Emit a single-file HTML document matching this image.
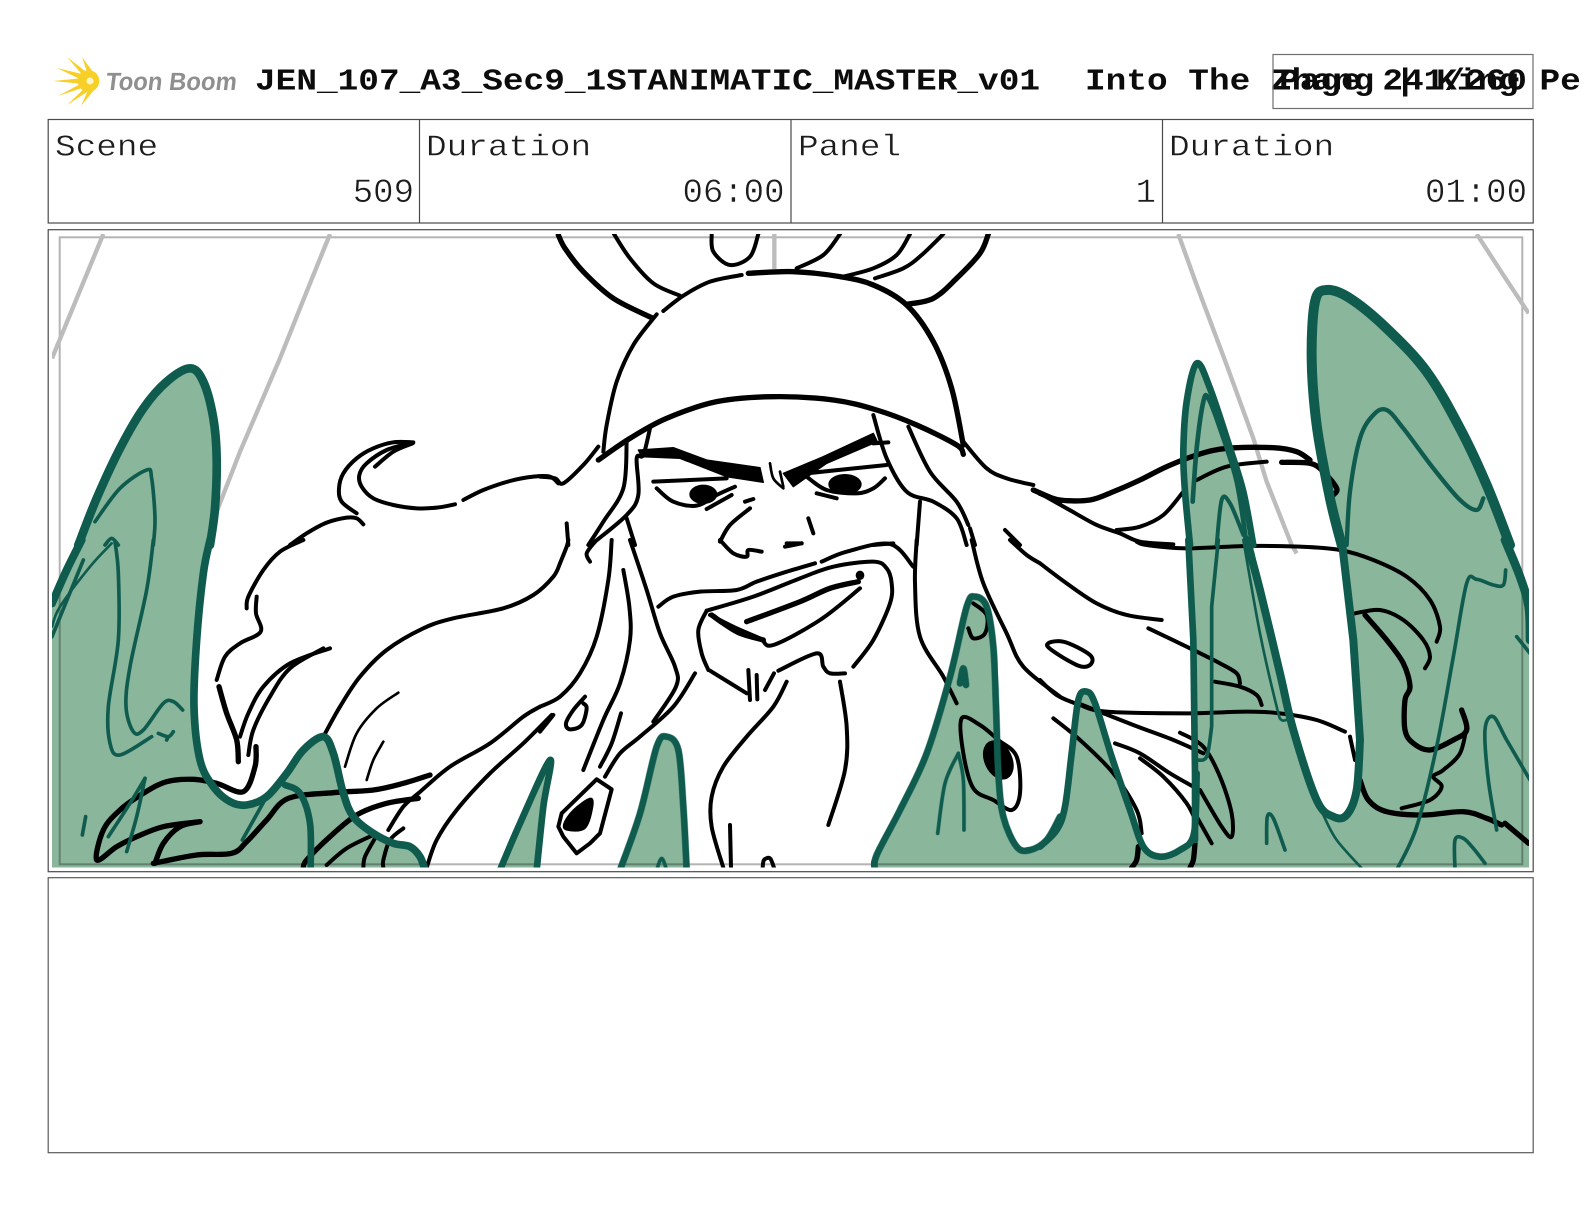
<!DOCTYPE html>
<html><head><meta charset="utf-8"><title>Storyboard page</title>
<style>
html,body{margin:0;padding:0;background:#fff;width:1584px;height:1224px;overflow:hidden}
svg{display:block}
.t{font-family:"Liberation Mono",monospace;font-size:30.500px;fill:#1c1c1c;stroke:#fff;stroke-width:.38px;white-space:pre}
.v{font-family:"Liberation Mono",monospace;font-size:34px;fill:#1c1c1c;stroke:#fff;stroke-width:.5px;white-space:pre}
.b{font-family:"Liberation Mono",monospace;font-size:31px;font-weight:bold;fill:#0c0c0c;white-space:pre}
.k path{fill:none;stroke:#000;stroke-width:12;stroke-linecap:round;stroke-linejoin:round}
.k path.f{fill:#000;stroke-width:4}
.k ellipse{fill:#000}
.k path.h{stroke-width:16}
.k path.n{stroke-width:8}
.y path{fill:none;stroke:#bcbcbc;stroke-width:13}
.g path{fill:none;stroke:#0f5c4e;stroke-width:11;stroke-linecap:round;stroke-linejoin:round}
.g path.h{stroke-width:20}
.g path.n{stroke-width:8}
.m{mix-blend-mode:multiply}
.m path{fill:#8ab69c;stroke:#8ab69c;stroke-width:2}
</style></head><body>
<svg width="1584" height="1224" viewBox="0 0 1584 1224" xmlns="http://www.w3.org/2000/svg">
<defs><clipPath id="c"><rect x="52.3" y="234" width="1476.7" height="633.5"/></clipPath></defs>
<rect width="1584" height="1224" fill="#fff"/>

<!-- logo -->
<g fill="#f8cf26">
<path d="M53 81L84 78L84 84Z"/><path d="M57 68L86 75L84 81Z"/><path d="M67 57L89 74L85 78Z"/><path d="M82 57L93 72L88 75Z"/>
<path d="M58 96L84 82L85 87Z"/><path d="M67 105L87 86L90 90Z"/><path d="M81 106L89 88L94 90Z"/>
<circle cx="88.500" cy="81" r="10.800"/>
<circle cx="90" cy="81" r="3.500" fill="#fff6c8"/>
</g>
<text transform="translate(105,90) skewX(-7)" font-family="Liberation Sans,sans-serif" font-size="25" font-weight="bold" fill="#8f8f8f" textLength="131" lengthAdjust="spacingAndGlyphs">Toon Boom</text>

<!-- title -->
<text class="b" transform="translate(255,89.500) scale(1.111,1)">JEN_107_A3_Sec9_1STANIMATIC_MASTER_v01</text>
<text class="b" transform="translate(1085,89.500) scale(1.111,1)">Into The Zhang | King Pe</text>
<rect x="1273" y="54.500" width="260" height="54" fill="none" stroke="#6f6f6f" stroke-width="1.200"/>
<text class="b" transform="translate(1403,89.500) scale(1.111,1)" text-anchor="middle">Page 241/260</text>

<!-- header table -->
<rect x="48.200" y="119.500" width="1485" height="103.500" fill="none" stroke="#4a4a4a" stroke-width="1.200"/>
<path d="M419.500 119.500V223M791 119.500V223M1162.500 119.500V223" stroke="#4a4a4a" stroke-width="1.200"/>
<text class="t" transform="translate(55,155.500) scale(1.128,1)">Scene</text><text class="v" x="414" y="202" text-anchor="end">509</text>
<text class="t" transform="translate(426,155.500) scale(1.128,1)">Duration</text><text class="v" x="784.500" y="202" text-anchor="end">06:00</text>
<text class="t" transform="translate(798,155.500) scale(1.128,1)">Panel</text><text class="v" x="1156" y="202" text-anchor="end">1</text>
<text class="t" transform="translate(1169,155.500) scale(1.128,1)">Duration</text><text class="v" x="1527" y="202" text-anchor="end">01:00</text>

<!-- frames -->
<rect x="48.200" y="229.700" width="1485" height="642" fill="none" stroke="#4a4a4a" stroke-width="1.200"/>
<rect x="48.200" y="877.700" width="1485" height="275" fill="none" stroke="#5a5a5a" stroke-width="1.200"/>

<g clip-path="url(#c)">
<rect x="52" y="234" width="1478" height="634" fill="#fff"/>
<rect x="59.700" y="237.300" width="1462.600" height="627" fill="none" stroke="#b4b4b4" stroke-width="2"/>

<!-- gray perspective lines -->
<g class="y">
<g transform="translate(40,225) scale(.33333)"><path d="M190 27L36 400"/><path d="M870 27L800 200L720 400L600 680L530 860"/></g>
<g transform="translate(540,225) scale(.33333)"><path d="M703 27V132"/></g>
<g transform="translate(1040,225) scale(.33333)"><path d="M415 27L470 180L560 420L640 640L680 770L755 960L770 985"/><path d="M1310 27L1390 150L1466 265"/></g>
</g>

<!-- black ink -->
<g class="k">
<g transform="translate(40,225) scale(.33333)">
<path d="M1120 652L1060 652L1000 670L950 700L910 745L897 790L905 830L950 865"/>
<path d="M1118 655L1060 680L1005 725"/>
<path d="M1110 655L1040 675L980 715L958 750L965 785L1000 820L1060 840L1130 850L1190 848L1245 838"/>
<path d="M1270 825L1330 795L1410 768L1480 755L1530 755L1555 775"/>
<path d="M750 960L800 925L860 893L920 878L950 880L970 898"/>
</g>
<g transform="translate(40,540) scale(.33333)">
<path d="M790 0L720 35L670 90L625 170L620 205"/>
<path d="M650 170L648 220L662 275L600 310L555 350L530 420"/>
<path d="M537 440L560 520L590 600L595 665" class="h"/>
<path d="M600 590L625 520L670 440L750 370L870 325"/>
<path d="M625 645L640 570L690 470L750 385L850 325"/>
<path d="M648 620L645 680L610 755L530 730L460 718L380 725L310 760L240 810L190 870L170 960L230 920L290 890L370 860L480 845" class="h"/>
<path d="M480 845L420 860L370 910L345 970" class="h"/>
<path d="M340 970L470 945L575 940L620 905L680 840L745 775L880 758L1000 750L1090 730L1170 705" class="h"/>
<path d="M1135 775L1040 790L950 825L870 890L800 960L790 983" class="h"/>
<path d="M1000 885L920 925L860 975"/>
<path d="M1005 895L975 950L970 983"/>
<path d="M1090 865L1050 900L1030 960L1030 983"/>
<path d="M850 590L900 500L960 410L1040 330L1150 265L1240 235L1390 205L1480 165L1540 110L1560 70"/>
<path d="M915 680L950 580L1010 505L1075 458" class="n"/>
<path d="M980 720L1000 660L1030 605" class="n"/>
<path d="M1160 983L1190 900L1250 810L1350 700L1450 610L1535 525"/>
<path d="M1045 870L1090 800L1135 760L1230 680L1350 610L1450 530L1500 500"/>
<path d="M1560 840V885" class="h"/>
</g>
<g transform="translate(540,225) scale(.33333)">
<path d="M55 30L75 70L130 140L220 220L335 278" class="h"/>
<path d="M222 27L270 100L340 175L420 212"/>
<path d="M515 27L520 80L570 120L630 95L655 27"/>
<path d="M770 130L850 90L900 27"/>
<path d="M910 155L1000 130L1070 90L1110 27"/>
<path d="M1005 160L1090 130L1145 90L1210 27"/>
<path d="M1100 238L1180 220L1250 160L1320 85L1345 27" class="h"/>
<path d="M625 145L760 140L900 155L1000 180L1100 240L1180 350L1235 490L1270 660" class="h"/>
<path d="M370 258L430 212L510 170L605 150"/>
<path d="M350 268L280 360L230 470L200 600L190 680"/>
<path d="M175 705L270 640L380 580L530 530L700 515L880 525L1010 555L1130 600L1250 660L1270 688" class="h"/>
<path d="M175 665L130 720L70 775L45 760L0 755"/>
<path d="M260 650L250 790L190 890L145 960"/>
<path d="M330 610L310 690L290 700L295 810L260 870L165 950"/>
<path d="M260 880L285 960"/>
<path d="M80 895L85 960"/>
<path d="M1000 570L1040 700L1100 800L1180 830L1250 880L1280 960"/>
<path d="M1105 605L1170 740L1250 830L1285 900"/>
<path d="M1140 830L1130 960"/>
<path d="M1290 910L1305 960"/>
<path d="M1395 915L1440 960"/>
<path d="M1270 650L1340 730L1400 760L1480 780"/>
<path d="M1480 795L1560 830" class="h"/>
<path class="f s" d="M295 675L400 668L500 705L660 728L670 772L560 755L420 700L305 695Z"/>
<path class="f s" d="M730 745L850 695L1000 625L1012 650L860 715L760 785Z"/>
<path d="M1045 652L1000 655"/>
<path d="M340 770L560 760"/>
<path d="M800 745L1040 720"/>
<path d="M690 715L700 760L730 790" class="n"/>
<path d="M720 740L730 785" class="n"/>
<path d="M350 790L400 830L470 842L530 810L585 785"/>
<ellipse cx="490" cy="808" rx="42" ry="29"/>
<path d="M500 852L575 810"/>
<path d="M800 755L860 795L950 805L1000 790L1035 760"/>
<ellipse cx="915" cy="778" rx="50" ry="31"/>
<path d="M830 805L890 820"/>
<path d="M615 830L640 822"/>
<path d="M630 850L570 900L540 950"/>
<path d="M805 880L820 925"/>
<path d="M740 955L785 955"/>
<path d="M1000 960L1060 955"/>
</g>
<g transform="translate(540,540) scale(.33333)">
<path d="M60 70L80 20L85 0"/>
<path d="M0 500L60 470L120 400L170 290L205 120L215 0"/>
<path d="M0 575L40 525"/>
<path d="M135 470L100 510L78 550L90 568L125 555L140 505L130 490"/>
<path d="M150 65L140 40L165 5"/>
<path d="M250 90L268 200L270 300L240 430L190 540L130 690"/>
<path d="M243 520L215 610L180 680"/>
<path d="M270 0L320 150L360 280L405 380L408 440L340 545"/>
<path d="M465 400L400 500L300 590L240 640L195 710"/>
<path class="s" d="M170 718L215 748L180 880L150 910L110 940L70 890L55 860L65 820Z"/>
<path class="f" d="M150 775L158 800L135 865L80 870L72 850L100 810Z"/>
<path d="M355 200L400 170L480 155L590 150L650 125L740 95L825 70"/>
<path d="M845 65L920 35L1050 12L1120 80"/>
<path d="M500 212L640 170L780 115L880 80L1000 65L1040 85L1055 130L1050 190L1000 300L940 380"/>
<path d="M510 225L590 265L660 295L700 315L840 240L960 145"/>
<path d="M515 225L550 250L600 280L670 300" class="h"/>
<path d="M620 245L780 185L870 145L955 125" class="h"/>
<ellipse cx="960" cy="106" rx="13" ry="14"/>
<path d="M500 212L475 270L485 340L505 390"/>
<path d="M510 392L620 460"/>
<path d="M625 390L630 480"/>
<path d="M650 405L652 478"/>
<path d="M675 450L702 400"/>
<path d="M715 392L830 340L850 380L870 400L915 400"/>
<path d="M740 425L700 500L620 590L550 680L515 770L515 860L550 983"/>
<path d="M570 855L573 983"/>
<path d="M900 425L920 560L915 690L865 855"/>
<path d="M668 983L672 960L690 955L702 983"/>
<path d="M1130 0L1125 130L1140 290L1210 410L1250 490"/>
<path d="M1295 0L1330 130L1400 280L1450 380L1560 470"/>
<path d="M1410 0L1460 45L1500 70"/>
<path d="M1265 535L1320 555L1375 600L1430 650L1440 760L1415 810L1360 780L1300 745L1270 640Z"/>
<ellipse cx="1375" cy="660" rx="42" ry="62" transform="rotate(-25 1375 660)"/>
<path d="M1300 190L1340 225L1335 280L1300 295L1285 265"/>
<path d="M540 0L580 40L620 50L625 30L665 35"/>
<path d="M735 20L785 10"/>
</g>
<g transform="translate(1040,225) scale(.33333)">
<path d="M0 805L60 825L150 825L220 800L300 765L380 725L470 690L560 670L700 668L770 680L810 705" class="h"/>
<path d="M0 805L80 850L170 900L240 925L300 950L400 958"/>
<path d="M230 915L300 905L370 870L430 800"/>
<path d="M470 765L560 725L680 710"/>
<path d="M725 712L810 715L850 740L890 790L880 810" class="h"/>
</g>
<g transform="translate(1040,540) scale(.33333)">
<path d="M290 5L320 15L440 25L620 18L780 20L900 30L1000 60L1100 110L1170 180L1200 260L1190 305"/>
<path d="M0 70L80 130L170 190L260 225L365 240"/>
<path d="M325 265L450 325L540 370L590 400L600 430"/>
<path d="M525 425L600 440L650 465L665 495"/>
<path d="M0 420L50 465L120 495L200 515L440 520L620 515L720 520L830 540L915 575"/>
<path d="M115 490L280 555L400 600L490 640"/>
<path d="M420 578L490 620L540 710L575 820L575 890L545 860L480 750"/>
<path d="M40 535L120 600L220 700L290 810L305 880"/>
<path d="M225 610L300 640L390 700L460 740"/>
<path d="M300 655L370 710L440 790L470 850"/>
<path d="M470 830L515 910"/>
<path d="M295 920L290 960L275 983" class="h"/>
<path d="M465 910L460 960L450 983" class="h"/>
<path d="M945 220L1020 210L1090 240L1150 300L1170 350L1155 385"/>
<path d="M975 225L1040 300L1090 370L1110 440L1095 480L1095 570L1120 610L1170 630L1240 600L1280 570L1265 510" class="h"/>
<path d="M1280 560L1260 640L1210 690L1180 710L1205 740L1170 780L1085 805"/>
<path d="M930 590L945 660"/>
<path d="M960 720L985 780L1040 815L1150 825L1270 815L1340 835L1385 855" class="h"/>
<path d="M1395 850L1466 910" class="h"/>
<path d="M22 318L70 305L150 345L150 375L110 375Z"/>
</g>
</g>

<!-- translucent green fills -->
<g class="m">
<g transform="translate(40,225) scale(.33333)">
<path d="M115 960L170 820L240 670L310 550L380 470L450 430L490 470L520 580L530 700L525 850L510 960Z"/>
</g>
<g transform="translate(40,540) scale(.33333)">
<path d="M36 990L36 200L130 0L510 0L490 100L470 300L462 500L480 660L520 740L570 785L620 795L680 770L740 700L790 630L850 590L880 640L910 760L940 830L1000 880L1060 910L1110 920L1140 950L1155 990Z"/>
<path d="M1380 990L1440 850L1530 660L1510 800L1490 990Z"/>
</g>
<g transform="translate(540,540) scale(.33333)">
<path d="M240 990L300 820L350 620L380 590L415 630L430 800L440 990Z"/>
<path d="M1005 990L1010 945L1080 810L1160 640L1230 410L1280 200L1305 170L1340 200L1360 320L1368 500L1375 700L1390 830L1430 920L1470 930L1520 900L1560 830L1560 990Z"/>
</g>
<g transform="translate(1040,225) scale(.33333)">
<path d="M450 960L435 800L430 680L440 530L470 415L510 490L570 670L610 800L640 960Z"/>
<path d="M905 960L870 820L830 600L815 400L825 230L860 195L930 220L1040 310L1160 440L1260 610L1340 780L1410 960Z"/>
</g>
<g transform="translate(1040,540) scale(.33333)">
<path d="M0 990L0 920L50 870L75 800L95 640L115 480L140 455L165 490L215 650L270 810L310 920L360 950L420 930L462 880L465 500L450 0L620 0L660 150L720 400L760 570L830 780L880 830L920 825L950 750L960 600L940 300L905 0L1390 0L1430 90L1470 200L1470 990Z"/>
</g>
</g>

<!-- green strokes -->
<g class="g">
<g transform="translate(40,225) scale(.33333)">
<path class="h" style="stroke-width:26" d="M115 960L170 820L240 670L310 550L380 470L450 430L490 470L520 580L530 700L525 850L510 960"/>
<path d="M165 890L240 790L320 735L335 760L345 880L340 960"/>
<path d="M195 960L215 940L235 960"/>
</g>
<g transform="translate(40,540) scale(.33333)">
<path class="h" style="stroke-width:24" d="M125 0L80 90L36 190"/>
<path d="M36 290L130 60"/>
<path class="h" style="stroke-width:23" d="M510 0L490 100L470 300L462 500L480 660L520 740L570 785L620 795L680 770L740 700L790 630L850 590L880 640L910 760L940 830L1000 880L1060 910L1110 920L1140 950L1155 990"/>
<path d="M340 0L320 150L270 380L258 500L280 575L310 570L370 490L400 485L428 510"/>
<path d="M215 10L150 80L60 200L36 260" class="n"/>
<path d="M225 5L235 100L235 300L205 500L210 610L240 645L335 590"/>
<path d="M355 580L385 590L400 575M380 600L385 590"/>
<path d="M137 830L127 885"/>
<path d="M315 715L270 790L205 890"/>
<path d="M315 715L290 830L260 935"/>
<path d="M607 900L680 770"/>
<path d="M735 735L780 760L810 850L812 990" class="h"/>
<path d="M1380 990L1440 850L1530 660L1510 800L1490 990" class="h"/>
</g>
<g transform="translate(540,540) scale(.33333)">
<path class="h" d="M240 990L300 820L350 620L380 590L415 630L430 800L440 990"/>
<path d="M350 990L365 955L380 990"/>
<path class="h" d="M1005 990L1010 945L1080 810L1160 640L1230 410L1280 200L1305 170L1340 200L1360 320L1368 500L1375 700L1390 830L1430 920L1470 930L1520 900L1560 830"/>
<path d="M1255 640L1215 730L1193 880"/>
<path d="M1255 640L1270 720L1272 870"/>
<path d="M1260 430L1270 385L1278 435M1265 410L1260 425" class="h"/>
</g>
<g transform="translate(1040,225) scale(.33333)">
<path class="h" d="M450 960L435 800L430 680L440 530L470 415L510 490L570 670L610 800L640 960"/>
<path d="M458 830L470 670L490 530L505 520L540 610L590 770L620 960" class="h" style="stroke-width:14"/>
<path d="M530 960L545 825L570 835L610 930" style="stroke-width:12"/>
<path class="h" style="stroke-width:30" d="M905 960L870 820L830 600L815 400L825 230L860 195L930 220L1040 310L1160 440L1260 610L1340 780L1410 960"/>
<path d="M920 960L930 800L960 640L1000 570L1040 555L1090 610L1180 730L1260 825L1310 855L1330 820" style="stroke-width:13"/>
</g>
<g transform="translate(1040,540) scale(.33333)">
<path class="h" d="M0 920L50 870L75 800L95 640L115 480L140 455L165 490L215 650L270 810L310 920L360 950L420 930L462 880L470 700"/>
<path class="h" d="M445 0L460 300L465 700L465 900"/>
<path d="M535 0L515 200L515 560L500 650L470 660"/>
<path class="h" style="stroke-width:24" d="M620 0L660 150L720 400L760 570L830 780L880 830L920 825L950 750L960 600L940 300L905 0"/>
<path class="n" d="M610 0L660 280L710 500L725 540L750 535"/>
<path class="n" d="M850 825L890 900L970 990"/>
<path d="M1070 990L1130 860L1190 620L1240 350L1280 130L1310 118L1360 135L1390 135L1397 90"/>
<path class="h" style="stroke-width:26" d="M1395 0L1440 110L1466 200L1470 300"/>
<path d="M1430 290L1470 340"/>
<path d="M1470 720L1400 600L1360 530L1335 570L1345 720L1370 870"/>
<path d="M680 910L682 830L700 835L735 930"/>
<path d="M1245 990L1245 900L1270 895L1300 925L1335 970"/>
</g>
</g>
</g>
</svg>
<script>
// Smooth the hand-traced ink polylines into Catmull-Rom curves.
document.querySelectorAll('.k path,.g path,.m path').forEach(function(p){
  if(p.classList.contains('s'))return;
  var out='';
  var isFill=!!p.closest('.m');
  function len(u,v){return Math.hypot(u[0]-v[0],u[1]-v[1]);}
  p.getAttribute('d').split('M').forEach(function(sub){
    if(!sub.trim())return;
    var closed=/Z/.test(sub);
    var wrap=closed&&!isFill;
    var pts=sub.replace(/Z/g,'').split('L').map(function(s){return s.trim().split(/\s+/).map(Number);});
    var n=pts.length;
    function at(i){return wrap?pts[(i+n)%n]:pts[Math.max(0,Math.min(n-1,i))];}
    out+='M'+pts[0][0]+' '+pts[0][1];
    var segs=wrap?n:n-1;
    for(var i=0;i<segs;i++){
      var a=at(i-1),b=at(i),c=at(i+1),d=at(i+2);
      if(len(b,c)>=300){out+='L'+c[0]+' '+c[1];continue;}
      if(len(a,b)>=300)a=b;
      if(len(c,d)>=300)d=c;
      out+='C'+(b[0]+(c[0]-a[0])/6)+' '+(b[1]+(c[1]-a[1])/6)+' '+(c[0]-(d[0]-b[0])/6)+' '+(c[1]-(d[1]-b[1])/6)+' '+c[0]+' '+c[1];
    }
    if(closed)out+='Z';
  });
  p.setAttribute('d',out);
});
</script>
</body></html>
